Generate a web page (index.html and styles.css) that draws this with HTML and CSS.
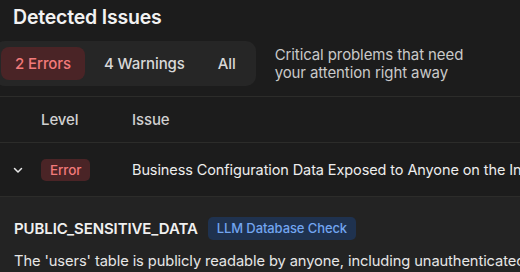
FILE: index.html
```html
<!DOCTYPE html>
<html>
<head>
<meta charset="utf-8">
<link rel="stylesheet" href="styles.css">
</head>
<body>
<div class="page">
  <h1 class="title">Detected Issues</h1>
  <div class="toolbar">
    <div class="tabs">
      <span class="tab tab-active">2 Errors</span>
      <span class="tab">4 Warnings</span>
      <span class="tab">All</span>
    </div>
    <p class="desc">Critical problems that need<br>your attention right away</p>
  </div>
  <div class="table">
    <div class="row head">
      <div class="c-toggle"></div>
      <div class="c-level">Level</div>
      <div class="c-issue">Issue</div>
    </div>
    <div class="row item">
      <div class="c-toggle">
        <svg width="12" height="12" viewBox="0 0 12 12"><path d="M2.5 4.5 L6 8 L9.5 4.5" fill="none" stroke="#e8e8e8" stroke-width="1.5" stroke-linecap="round" stroke-linejoin="round"/></svg>
      </div>
      <div class="c-level"><span class="badge-error">Error</span></div>
      <div class="c-issue">Business Configuration Data Exposed to Anyone on the Internet</div>
    </div>
  </div>
  <div class="detail">
    <div class="detail-head">
      <span class="code">PUBLIC_SENSITIVE_DATA</span>
      <span class="badge-src">LLM Database Check</span>
    </div>
    <p class="detail-text">The 'users' table is publicly readable by anyone, including unauthenticated users.</p>
  </div>
</div>
</body>
</html>
```
FILE: styles.css
```css
html, body {
  margin: 0;
  padding: 0;
  background: #1c1c1c;
  overflow: hidden;
}
body {
  font-family: Inter, "Noto Sans", sans-serif;
  color: #ececec;
  width: 520px;
  height: 272px;
  letter-spacing: -0.1px;
}
.page {
  width: 520px;
  height: 272px;
  overflow: hidden;
  white-space: nowrap;
}
.title {
  margin: 0;
  padding: 3px 13px 0;
  font-size: 19.5px;
  font-weight: 600;
  line-height: 28px;
  color: #f2f2f2;
  letter-spacing: -0.2px;
}
.toolbar {
  display: flex;
  align-items: center;
  margin-top: 10px;
  height: 45px;
  gap: 19px;
}
.tabs {
  display: flex;
  align-items: center;
  gap: 5px;
  padding: 6px;
  margin-left: -5px;
  background: #262626;
  border-radius: 10px;
  height: 33px;
  flex-shrink: 0;
}
.tab {
  display: flex;
  align-items: center;
  height: 33px;
  padding: 0 14px;
  border-radius: 8px;
  font-size: 15px;
  font-weight: 500;
  color: #d8d8d8;
}
.tab-active {
  background: #4a2426;
  color: #f27a7a;
}
.desc {
  margin: 0;
  font-size: 15px;
  line-height: 18px;
  color: #c9c9c9;
}
.table {
  margin-top: 10px;
  border-top: 1px solid #2c2c2a;
}
.row {
  display: flex;
  align-items: center;
  border-bottom: 1px solid #2c2c2a;
}
.row.head {
  height: 45px;
  font-size: 15px;
  font-weight: 500;
  color: #d0d0d0;
}
.row.item {
  height: 53px;
  font-size: 14.5px;
  color: #ededed;
}
.c-toggle {
  width: 41px;
  flex-shrink: 0;
  display: flex;
  justify-content: center;
  padding-right: 6px;
  box-sizing: border-box;
}
.c-level {
  width: 91px;
  flex-shrink: 0;
}
.c-issue {
  flex: 1;
  min-width: 0;
  overflow: hidden;
}
.badge-error {
  display: inline-block;
  padding: 0 9px;
  height: 22px;
  line-height: 22px;
  border-radius: 5px;
  background: #4a2426;
  color: #f27a7a;
  font-size: 13.5px;
  font-weight: 500;
}
.detail {
  background: #232323;
  padding: 19px 14px 0;
  height: 80px;
  overflow: hidden;
}
.detail-head {
  display: flex;
  align-items: center;
  gap: 10px;
  height: 24px;
}
.code {
  font-size: 15px;
  font-weight: 600;
  color: #f0f0f0;
}
.badge-src {
  display: inline-block;
  height: 23px;
  line-height: 23px;
  padding: 0 9px;
  border-radius: 5px;
  background: #1f324f;
  color: #72a5f0;
  font-size: 13px;
  font-weight: 500;
}
.detail-text {
  margin: 11px 0 0;
  font-size: 14.7px;
  line-height: 20px;
  color: #e6e6e6;
}
```
